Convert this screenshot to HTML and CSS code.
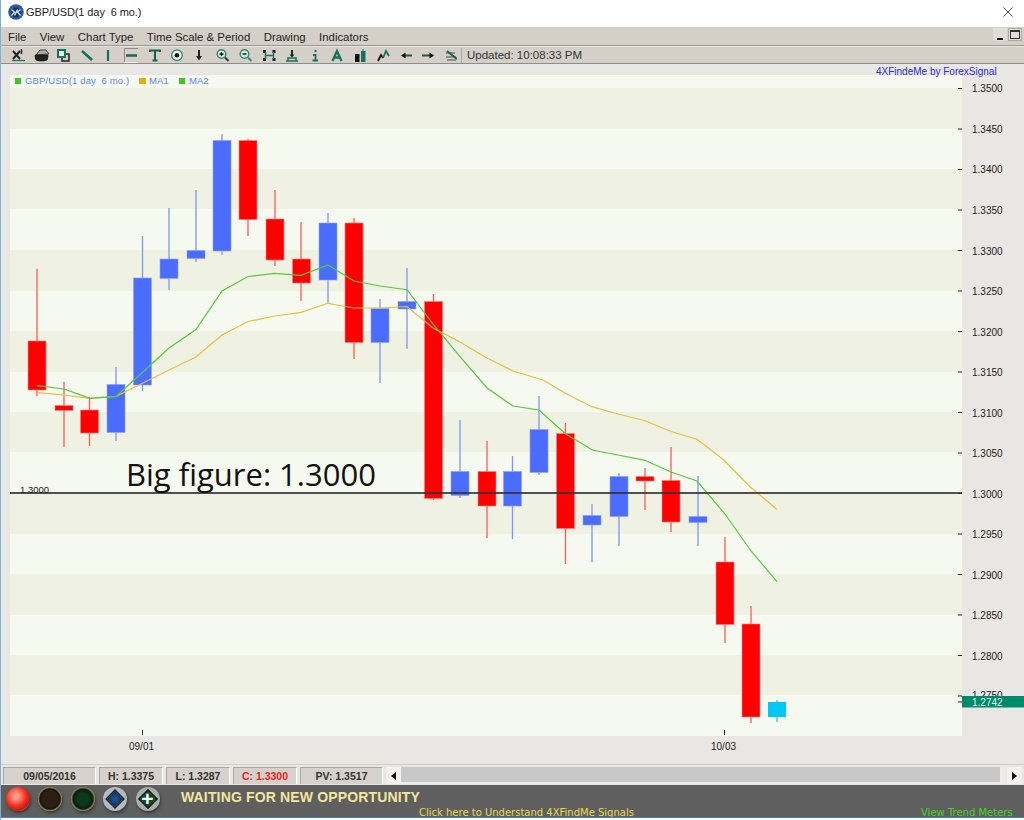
FILE: index.html
```html
<!DOCTYPE html>
<html lang="en">
<head>
<meta charset="utf-8">
<title>GBP/USD</title>
<link rel="stylesheet" href="styles.css">
</head>
<body>
<div class="window">
  <header class="titlebar">
    <svg class="app-icon" width="16" height="16" viewBox="0 0 16 16"><circle cx="8" cy="8" r="7.8" fill="#2a5a9c"/><circle cx="8" cy="8.500" r="5" fill="#12365f"/><path d="M3.500 5.500l3 2.500-3 3.500M6.500 11.500l3-6M12.500 5.500L9.500 8l3 3.500" fill="none" stroke="#d8e4f0" stroke-width="1.300"/></svg>
    <span class="title">GBP/USD(1 day&nbsp; 6 mo.)</span>
    <svg class="close" width="12" height="12" viewBox="0 0 12 12"><path d="M1.500 1.500l9 9M10.500 1.500l-9 9" stroke="#444" stroke-width="1"/></svg>
  </header>
  <nav class="menubar">
    <span class="menu">File</span><span class="menu">View</span><span class="menu">Chart Type</span><span class="menu">Time Scale &amp; Period</span><span class="menu">Drawing</span><span class="menu">Indicators</span>
    <span class="winbtns"><span class="winbtn min"></span><span class="winbtn max"></span></span>
  </nav>
  <div class="toolbar">
    <svg class="toolicons" width="456" height="16" viewBox="1 -1 456 16" fill="none" stroke="#1a6f5e" stroke-width="2">
      <path d="M13 3l7 8M20 3l-7 8" stroke="#222"/><path d="M21.500 1v5" stroke="#222" stroke-width="1.500"/><path d="M12 12.500h13" stroke-width="1.200"/>
      <path d="M36 7l4-5h6l3 4z" fill="#aaa" stroke="#444" stroke-width="1"/><path d="M35 7h13v2a4 4 0 0 1-4 4h-5a4 4 0 0 1-4-4z" fill="#222" stroke="#111" stroke-width=".6"/>
      <rect x="62" y="6" width="7" height="7" stroke="#222" stroke-width="1.500"/><rect x="58" y="2" width="7" height="7" fill="#e6f2ee" stroke-width="2"/>
      <path d="M82 3l10 9" stroke-width="2.600"/>
      <path d="M108 2v11" stroke-width="2.200"/>
      <path d="M124.500 14V.5H138" stroke="#8c8a84" stroke-width="1"/><path d="M124.500 14.500H138" stroke="#eeeeea" stroke-width="1"/>
      <path d="M126 7.500h11" stroke-width="2.600"/>
      <path d="M150 4V2.500h10V4M155 2.500v10M152.500 12.500h5" stroke="#15604f" stroke-width="2"/>
      <circle cx="177" cy="7.300" r="5.300" fill="#eef2ee" stroke="#3c8f7c" stroke-width="1.500"/><circle cx="177" cy="7.300" r="2.300" fill="#111" stroke="none"/>
      <path d="M199 2v7" stroke="#222" stroke-width="2"/><path d="M196 8h6l-3 4.500z" fill="#222" stroke="none"/>
      <circle cx="221.500" cy="6" r="4.300" fill="#dfe8e2" stroke="#2f8a76" stroke-width="1.500"/><path d="M225 9.500l3.500 3.500" stroke="#333" stroke-width="2"/><path d="M219.500 6h4M221.500 4v4" stroke="#111" stroke-width="1.300"/>
      <circle cx="244.500" cy="6" r="4.300" fill="#dfe8e2" stroke="#2f8a76" stroke-width="1.500"/><path d="M248 9.500l3.500 3.500" stroke="#2f8a76" stroke-width="2"/><path d="M242.500 6h4" stroke="#111" stroke-width="1.400"/>
      <g fill="#222" stroke="none"><rect x="263" y="2" width="3" height="3"/><rect x="272.500" y="2" width="3" height="3"/><rect x="263" y="10" width="3" height="3"/><rect x="272.500" y="10" width="3" height="3"/></g>
      <path d="M265.500 4v7M273.500 4v7M266 7.500h7" stroke-width="1.400"/>
      <path d="M286 13h12M288 13v-3h8v3" stroke-width="1.500"/><path d="M292 2v6" stroke="#222" stroke-width="2"/><path d="M289.500 6.500h5L292 9.500z" fill="#222" stroke="none"/>
      <path d="M314.500 3h2M313 7h2.500v5.500M312.500 12.500h5.500" stroke-width="1.800"/>
      <path d="M332.500 13l4.500-10 4.500 10M334.500 9.500h5" stroke-width="2.300"/>
      <rect x="355" y="6" width="4.500" height="8" fill="#111" stroke="none"/><rect x="361" y="3" width="4.500" height="11" fill="#1a6f5e" stroke="none"/><path d="M363 1v3" stroke-width="1"/>
      <path d="M378 13l3-6 2 3" stroke="#111" stroke-width="1.800"/><path d="M383 10l3-7 3 5" stroke-width="1.800"/>
      <path d="M403 7.500h9" stroke="#1a5a4c" stroke-width="2"/><path d="M405.500 4.500l-4.500 3 4.500 3z" fill="#111" stroke="none"/>
      <path d="M422 7.500h9" stroke="#1a5a4c" stroke-width="2"/><path d="M429.500 4.500l4.500 3-4.500 3z" fill="#111" stroke="none"/>
      <path d="M446 5h9M446 9h10M447 12h9" stroke="#777" stroke-width="1.500"/><path d="M447 3l10 8" stroke="#15604f" stroke-width="2"/>
    </svg>
    <span class="updated">Updated: 10:08:33 PM</span>
  </div>
  <main class="chart">
    <svg class="plot" width="1023" height="701" viewBox="1 64 1023 701">
      <rect x="10" y="75" width="952" height="661" fill="#f6f9ef"/>
      <g fill="#eff2e2">
        <rect x="10" y="88" width="952" height="41"/><rect x="10" y="169" width="952" height="40"/><rect x="10" y="250" width="952" height="41"/><rect x="10" y="331" width="952" height="41"/><rect x="10" y="412" width="952" height="40"/><rect x="10" y="493" width="952" height="41"/><rect x="10" y="574" width="952" height="41"/><rect x="10" y="655" width="952" height="40"/>
      </g>
      <g class="lg">
        <rect x="15" y="78" width="6" height="6" fill="#3cc81e"/><text class="lg-main" x="25" y="84">GBP/USD(1 day&#160; 6 mo.)</text>
        <rect x="139" y="78" width="7" height="6" fill="#dcb400"/><text x="149" y="84">MA1</text>
        <rect x="179" y="78" width="6" height="6" fill="#3cc81e"/><text x="189" y="84">MA2</text>
      </g>
      <text class="brand" x="876" y="74.500">4XFindeMe by ForexSignal</text>
      <g stroke="#222" stroke-width="1">
        <path d="M958 88.500h4M958 129h4M958 169.500h4M958 210h4M958 250.500h4M958 291h4M958 331.500h4M958 372h4M958 412.500h4M958 453h4M958 493.500h4M958 534h4M958 574.500h4M958 615h4M958 655.500h4M958 696h4M958 702h4M142.500 730v5M724.500 730v5"/>
      </g>
      <g class="ax">
        <text x="972" y="92">1.3500</text><text x="972" y="133">1.3450</text><text x="972" y="173">1.3400</text><text x="972" y="214">1.3350</text><text x="972" y="255">1.3300</text><text x="972" y="295">1.3250</text><text x="972" y="336">1.3200</text><text x="972" y="376">1.3150</text><text x="972" y="417">1.3100</text><text x="972" y="457">1.3050</text><text x="972" y="498">1.3000</text><text x="972" y="538">1.2950</text><text x="972" y="579">1.2900</text><text x="972" y="619">1.2850</text><text x="972" y="660">1.2800</text><text x="972" y="699">1.2750</text>
        <text x="129" y="750">09/01</text><text x="711" y="750">10/03</text>
      </g>
      <g stroke="#ff5a5a" stroke-width="1.300">
        <path d="M37 268.700V396M64 381.700V447M89.500 396.700V446M248 139V236M275 190V266M301 222V301M354 218V359M433.500 294V500M487 441V538M565.500 423V564M645 468V510M671 447V532M725 537V643M751 606V723"/>
      </g>
      <g stroke="#7f95f8" stroke-width="1.300">
        <path d="M116 367V441M142.500 236V391M169 208V290M196 190V262M222 134V255M328 213V303M380 299V383M407 268V349M460 420V498M512.500 456V539M539 396V475M592 504V562M619 473V546M698 476V546"/>
        <path d="M777 700V722" stroke="#22ccf5"/>
      </g>
      <g fill="#ff0000" stroke="#ff8080" stroke-width=".6">
        <rect x="28" y="341" width="18" height="49"/><rect x="55" y="405.500" width="18" height="5"/><rect x="80.500" y="410" width="18" height="23"/><rect x="239" y="140.500" width="18" height="79"/><rect x="266" y="219" width="18" height="41"/><rect x="292.500" y="259" width="18" height="24"/><rect x="345" y="223" width="18" height="119.500"/><rect x="424.500" y="301.500" width="18" height="197"/><rect x="478" y="471.500" width="18" height="34.500"/><rect x="556.500" y="433.500" width="18" height="95"/><rect x="636" y="476.500" width="18" height="4.500"/><rect x="662" y="480.500" width="18" height="41.500"/><rect x="716" y="562" width="18" height="62.500"/><rect x="742" y="624" width="18" height="93"/>
      </g>
      <g fill="#4a6cff" stroke="#8ea2f8" stroke-width=".6">
        <rect x="107" y="384.500" width="18" height="48"/><rect x="133.500" y="278" width="18" height="107"/><rect x="160" y="259" width="18" height="19.500"/><rect x="187" y="250.500" width="18" height="8"/><rect x="213" y="140.500" width="18" height="110.500"/><rect x="319" y="223" width="18" height="57"/><rect x="371" y="308.500" width="18" height="34"/><rect x="398" y="301.500" width="18" height="7.500"/><rect x="451" y="471.500" width="18" height="24"/><rect x="503.500" y="471.500" width="18" height="34.500"/><rect x="530" y="429.500" width="18" height="43"/><rect x="583" y="515.500" width="18" height="9.500"/><rect x="610" y="476.500" width="18" height="40"/><rect x="689" y="516.500" width="18" height="6"/>
      </g>
      <rect x="768" y="702" width="18" height="15" fill="#00c8f5"/>
      <polyline class="ma1" points="37,392.700 64,395 90,398.300 116,396.300 143,383 169,370 196,357 222,335 248,321.500 275,316 301,312.300 328,303.300 354,308 380,308 407,306.500 433,328 460,342 487,358 513,371 543,380 566.700,394 591.700,406.700 618,414 645,420.700 671.700,431.700 697,439.300 723,459.300 750,486.700 776.700,509.300"/>
      <polyline class="ma2" points="37,385.700 64,389 90,398.300 116,396.300 143,372 169,348 196,329.500 222,291 248,276.500 275,273.300 301,275.300 328,265 354,281 380,286 407,289.700 433,324 460,356.700 487,388 513,406 539,410 565.700,434 593,450.300 618,455 645,460.300 671,472 697,481 725,514 751,551 777,581.700"/>
      <rect x="10" y="492" width="952" height="2" fill="#333" fill-opacity=".85"/>
      <text class="fig" x="20" y="493">1.3000</text>
      <text class="big" x="126" y="486">Big figure: 1.3000</text>
      <rect x="962" y="696" width="62" height="11.500" fill="#00896b"/>
      <text class="tag" x="972" y="706">1.2742</text>
    </svg>
  </main>
  <div class="statusbar">
    <span class="cell c-date">09/05/2016</span>
    <span class="cell c-h">H: 1.3375</span>
    <span class="cell c-l">L: 1.3287</span>
    <span class="cell c-c">C: 1.3300</span>
    <span class="cell c-pv">PV: 1.3517</span>
    <span class="arrow"><svg width="5" height="8" viewBox="0 0 5 8"><path d="M5 0v8L0 4z" fill="#111"/></svg></span>
    <span class="track"></span>
    <span class="thumb"></span>
    <span class="arrow right"><svg width="5" height="8" viewBox="0 0 5 8"><path d="M0 0v8l5-4z" fill="#111"/></svg></span>
  </div>
  <footer class="signals">
    <div class="bulbs">
      <span class="bulb red"></span><span class="bulb amber"></span><span class="bulb green"></span>
      <span class="bulb blue"><i class="diamond"></i></span>
      <span class="bulb plus"><i class="diamond"></i><b class="cross">+</b></span>
    </div>
    <div class="msgs">
      <span class="waiting">WAITING FOR NEW OPPORTUNITY</span>
      <span class="click">Click here to Understand 4XFindMe Signals</span>
    </div>
    <span class="trend">View Trend Meters</span>
  </footer>
</div>
</body>
</html>
```

FILE: styles.css
```css
* { box-sizing: border-box; }
html, body { margin: 0; padding: 0; background: #fff; }
body { width: 1024px; height: 820px; overflow: hidden; font-family: "Liberation Sans", Arial, sans-serif; }
.window { width: 1024px; height: 820px; display: flex; flex-direction: column; border-left: 1px solid #7fb2d8; }
.titlebar { height: 27px; flex: none; display: flex; align-items: center; padding: 0 0 3px 7px; background: #fff; }
.app-icon { flex: none; }
.title { margin-left: 2px; font-size: 11px; letter-spacing: -.1px; color: #222; }
.close { margin-left: auto; margin-right: 10px; }
.menubar { height: 19px; flex: none; display: flex; align-items: center; background: #d4d0c8; border-bottom: 1px solid #9b9992; padding: 2px 0 0 7px; font-size: 11.400px; color: #222; }
.menu { margin-right: 13.500px; }
.winbtns { margin-left: auto; display: flex; gap: 1px; margin-right: 2px; margin-top: -5px; }
.winbtn { width: 14px; height: 13px; background: #e0ddd6; position: relative; }
.max { border: 1px solid #aaa; }
.min::after { content: ""; position: absolute; left: 4px; bottom: 1px; width: 6px; height: 2px; background: #111; }
.max::after { content: ""; position: absolute; left: 1px; top: 1px; right: 1px; bottom: 1px; border: 1px solid #333; border-top-width: 2px; }
.toolbar { height: 18px; flex: none; display: flex; align-items: center; gap: 4px; background: #d4d0c8; border-top: 1px solid #e8e6e0; border-bottom: 1px solid #8f8d87; }
.toolicons { flex: none; }
.updated { font-size: 11.500px; color: #333; padding-left: 5px; border-left: 1px solid #aaa; line-height: 15px; }
.chart { height: 701px; flex: none; background: #e9e7e3; border-bottom: 1px solid #cfcdc8; }
.plot { display: block; }
.lg text { font: 9.500px "Liberation Sans", Arial, sans-serif; fill: #5b86ff; }
.lg .lg-main { letter-spacing: .14px; }
.brand { font: 10px "Liberation Sans", Arial, sans-serif; fill: #2a2af0; }
.ax text { font: 10px "Liberation Sans", Arial, sans-serif; fill: #222; }
.tag { font: 10px "Liberation Sans", Arial, sans-serif; fill: #e6f2ee; }
.fig { font: 9.500px "Liberation Sans", Arial, sans-serif; fill: #222; }
.big { font: 31px "Open Sans", sans-serif; fill: #111; }
.ma1, .ma2 { fill: none; stroke-width: 1.200; }
.ma1 { stroke: #e3c23e; }
.ma2 { stroke: #55c83c; }
.statusbar { height: 20px; flex: none; display: flex; align-items: stretch; padding: 2px 2px 1px 2px; gap: 3px; background: #e9e7e3; font-size: 10.500px; font-weight: 700; color: #333; }
.cell { display: flex; align-items: center; justify-content: center; background: #d6d2cb; border-top: 1px solid #a9a7a0; border-left: 1px solid #a9a7a0; border-right: 1px solid #fff; }
.c-date { width: 93px; }
.c-h { width: 64px; }
.c-l { width: 64px; }
.c-c { width: 64px; color: #f02020; }
.c-pv { width: 83px; }
.arrow { width: 15px; display: flex; align-items: center; justify-content: center; background: #f2f1ee; flex: none; }
.track { flex: 1; background: #c8c8c8; margin-left: -3px; border-bottom: 2px solid #efeeea; }
.thumb { width: 5px; background: #eeede9; margin-left: -3px; }
.arrow.right { margin-left: -1px; }
.signals { height: 33px; flex: none; display: flex; background: #5f5f5f; border-bottom: 1px solid #4a7fa5; position: relative; overflow: hidden; }
.bulbs { display: flex; gap: 8.500px; padding: 2px 0 0 4.500px; flex: none; }
.bulb { width: 24px; height: 24px; border-radius: 50%; position: relative; flex: none; box-shadow: 1px 2px 3px #3a3a3a; }
.red { background: radial-gradient(circle at 42% 38%, #ff9c8c 0 12%, #f5301e 48%, #c41a12 70%, #9a8a88 82%, #8a8a8a 100%); }
.amber { background: radial-gradient(circle, #2c1e12 0 48%, #17140e 60%, #a89a5a 70%, #8f8f80 100%); }
.green { background: radial-gradient(circle, #0e3a1c 0 30%, #0b1c12 58%, #8f9a50 70%, #8f8f80 100%); }
.blue { background: #b3bac0; }
.plus { background: #a9aea8; }
.diamond { position: absolute; left: 5px; top: 5px; width: 14px; height: 14px; transform: rotate(45deg); background: radial-gradient(circle, #1f5a9a, #12284e); border: 1px solid #111; }
.plus .diamond { background: #0f4a2a; }
.cross { position: absolute; left: 0; right: 0; top: 0; text-align: center; font-size: 21px; line-height: 23px; color: #fff; }
.msgs { margin-left: 21.500px; width: 460px; display: flex; flex-direction: column; }
.waiting { font-size: 14px; font-weight: 700; color: #f2e6a0; letter-spacing: .15px; line-height: 15px; margin-top: 4.500px; }
.click { font: 10px "DejaVu Sans", sans-serif; color: #ecd850; margin-left: 238px; margin-top: 2.500px; white-space: nowrap; line-height: 12px; }
.trend { font: 10px "DejaVu Sans", sans-serif; color: #4ed021; position: absolute; left: 920px; top: 22px; white-space: nowrap; line-height: 12px; }
```
